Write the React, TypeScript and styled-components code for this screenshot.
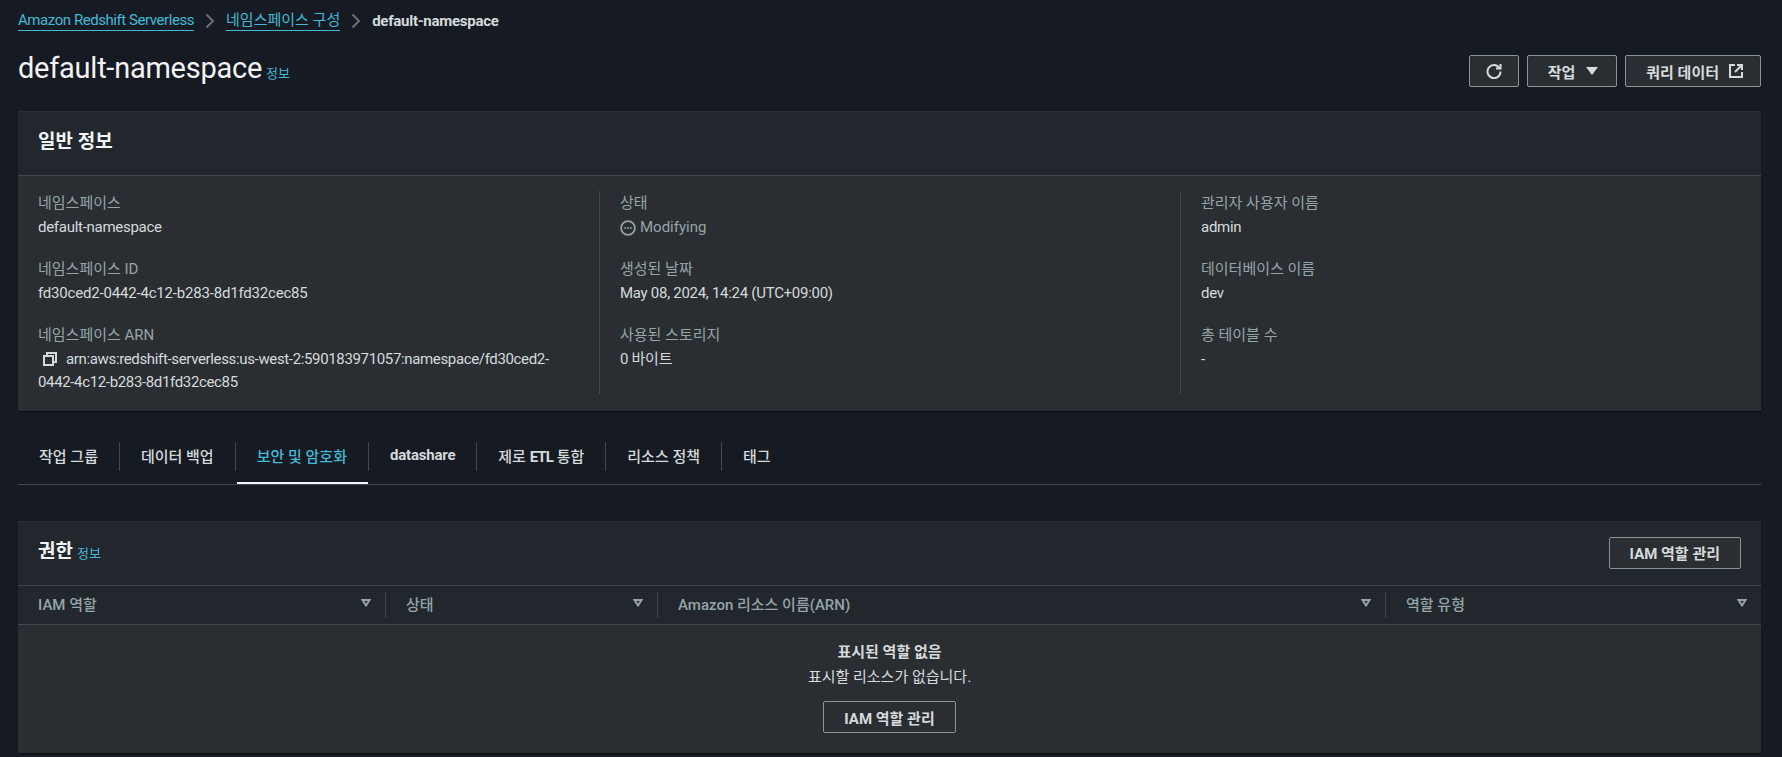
import React from 'react';
import styled, { createGlobalStyle } from 'styled-components';

const GlobalStyle = createGlobalStyle`
    html, body {
        margin: 0;
        height: 100%;
        background-color: #161a23;
    }
    body {
        font-family: Roboto, "Noto Sans CJK KR", sans-serif;
        font-size: 15px;
        color: #d5dbdb;
        overflow: hidden;
    }
    * {
        box-sizing: border-box;
    }
`;

const Page = styled.div`
    width: 1782px;
    height: 757px;
    padding: 0 21px 0 18px;
    overflow: hidden;
`;

const Breadcrumbs = styled.nav`
    display: flex;
    align-items: center;
    height: 40px;
    padding-top: 2px;
`;

const CrumbLink = styled.a<{ $latin?: boolean }>`
    color: #44b9d6;
    border-bottom: 1px solid #44b9d6;
    line-height: 19px;
    letter-spacing: ${(p) => (p.$latin ? '-0.44px' : '0')};
`;

const CrumbCurrent = styled.span`
    font-weight: 700;
    letter-spacing: -0.27px;
    color: #d5dbdb;
`;

const CrumbSep = styled.svg`
    width: 16px;
    height: 16px;
    margin: 0 8px;
    fill: none;
    stroke: #687078;
    stroke-width: 2;
`;

const PageHeader = styled.header`
    display: flex;
    justify-content: space-between;
    align-items: flex-start;
    height: 71px;
    padding-top: 10px;
`;

const Title = styled.h1`
    margin: 0;
    font-size: 29px;
    font-weight: 400;
    line-height: 36px;
    letter-spacing: -0.25px;
    color: #f2f3f3;
`;

const InfoLink = styled.a`
    margin-left: 4px;
    font-size: 13px;
    font-weight: 400;
    letter-spacing: 0;
    color: #44b9d6;
`;

const Actions = styled.div`
    display: flex;
    gap: 8px;
    margin-top: 5px;
`;

const Button = styled.button`
    display: inline-flex;
    align-items: center;
    justify-content: center;
    gap: 9px;
    height: 32px;
    padding: 0 20px;
    border: 1px solid #879596;
    border-radius: 2px;
    font-family: inherit;
    font-size: 15px;
    font-weight: 700;
    color: #d5dbdb;
    background-color: #2a2e33;
`;

const IconButton = styled(Button)`
    padding: 0 16px;
`;

const MenuButton = styled(Button)`
    padding: 0 16px 0 20px;
`;

const Icon = styled.svg`
    width: 16px;
    height: 16px;
    flex: none;
`;

const Card = styled.section`
    border-top: 1px solid #2a2e33;
    background-color: #2a2e33;
    box-shadow: 0 1px 1px rgba(0, 0, 0, 0.5);
`;

const CardHeader = styled.div`
    display: flex;
    justify-content: space-between;
    align-items: center;
    height: 64px;
    padding: 0 20px 2px;
    border-bottom: 1px solid #414750;
    background-color: #22272e;
`;

const CardTitle = styled.h2`
    margin: 0 0 6px;
    font-size: 19px;
    font-weight: 700;
    color: #f2f3f3;
`;

const Columns = styled.div`
    display: grid;
    grid-template-columns: repeat(3, 1fr);
    padding: 15px 0 17px;
    height: 235px;
`;

const Column = styled.div`
    display: flex;
    flex-direction: column;
    gap: 18px;
    padding: 0 20px;

    & + & {
        border-left: 1px solid #414750;
    }
`;

const Field = styled.div`
    display: flex;
    flex-direction: column;
`;

const Label = styled.div`
    line-height: 25px;
    color: #95a5a6;
`;

const Value = styled.div`
    line-height: 23px;
    letter-spacing: -0.28px;
    color: #d5dbdb;
`;

const IdValue = styled(Value)`
    letter-spacing: -0.19px;
`;

const ArnValue = styled(Value)`
    letter-spacing: -0.35px;
`;

const StatusValue = styled.div`
    display: flex;
    align-items: center;
    gap: 4px;
    line-height: 23px;
    color: #95a5a6;
`;

const CopyIcon = styled(Icon)`
    margin: 0 8px -3px 4px;
`;

const Tabs = styled.div`
    display: flex;
    align-items: flex-start;
    height: 74px;
    padding-top: 31px;
    border-bottom: 1px solid #414750;
`;

const Tab = styled.div<{ $active?: boolean }>`
    position: relative;
    display: flex;
    align-items: center;
    height: 29px;
    padding: 0 21px 3px;
    font-weight: 500;
    color: ${(p) => (p.$active ? '#44b9d6' : '#d5dbdb')};

    & + & {
        border-left: 1px solid #414750;
    }

    ${(p) =>
        p.$active &&
        `&::after {
            content: '';
            position: absolute;
            left: 1px;
            right: 0;
            bottom: -13px;
            height: 2px;
            background-color: #f2f3f3;
        }`}
`;

const TabLatin = styled.b`
    font-weight: 700;
    letter-spacing: -0.2px;
    white-space: pre;
`;

const TabAcronym = styled(TabLatin)`
    letter-spacing: -0.9px;
`;

const PermissionCard = styled(Card)`
    margin-top: 36px;
`;

const HeadRow = styled.div`
    display: grid;
    grid-template-columns: 367px 272px 728px 1fr;
    align-items: center;
    height: 39px;
    border-bottom: 1px solid #414750;
    background-color: #22272e;
`;

const HeadCell = styled.div`
    display: flex;
    justify-content: space-between;
    align-items: center;
    height: 26px;
    padding: 0 11px 4px 20px;
    font-weight: 500;
    color: #95a5a6;

    & + & {
        border-left: 1px solid #414750;
    }
`;

const EmptyState = styled.div`
    display: flex;
    flex-direction: column;
    align-items: center;
    height: 128px;
    padding-top: 16px;
`;

const EmptyTitle = styled.div`
    font-weight: 700;
    line-height: 23px;
`;

const EmptyText = styled.div`
    line-height: 26px;
    margin-bottom: 11px;
`;

const RefreshIcon = () => (
    <Icon viewBox="0 0 16 16" fill="none" stroke="#d5dbdb" strokeWidth="2">
        <path d="M13.4 5A6.5 6.5 0 1 0 14.5 8.5" />
        <path d="M14.5 1v4.5H10" strokeLinejoin="miter" />
    </Icon>
);

const CaretIcon = () => (
    <Icon viewBox="0 0 16 16" fill="#d5dbdb">
        <path d="M2 4h12L8 12z" />
    </Icon>
);

const ExternalIcon = () => (
    <Icon viewBox="0 0 16 16" fill="none" stroke="#d5dbdb" strokeWidth="2">
        <path d="M7 2H2v12h12V9" />
        <path d="M9 2h5v5M14 2L7 9" />
    </Icon>
);

const ChevronSep = () => (
    <CrumbSep viewBox="0 0 16 16">
        <path d="M4.5 1.5L11 8l-6.5 6.5" />
    </CrumbSep>
);

const StatusIcon = () => (
    <Icon viewBox="0 0 16 16" fill="none" stroke="#95a5a6" strokeWidth="1.8">
        <circle cx="8" cy="8" r="6.9" />
        <path d="M4.5 8h1.4M7.3 8h1.4M10.1 8h1.4" />
    </Icon>
);

const FilterCaret = () => (
    <Icon viewBox="0 0 16 16" fill="none" stroke="#95a5a6" strokeWidth="2">
        <path d="M4.5 5h7L8 10.5z" />
    </Icon>
);

const tabs: { key: string; label: React.ReactNode }[] = [
    { key: 'workgroup', label: '작업 그룹' },
    { key: 'backup', label: '데이터 백업' },
    { key: 'security', label: '보안 및 암호화' },
    { key: 'datashare', label: <TabLatin>datashare</TabLatin> },
    { key: 'etl', label: <span>제로 <TabAcronym>ETL</TabAcronym> 통합</span> },
    { key: 'policy', label: '리소스 정책' },
    { key: 'tags', label: '태그' },
];
const headers = ['IAM 역할', '상태', 'Amazon 리소스 이름(ARN)', '역할 유형'];

export default function App() {
    return (
        <Page>
            <GlobalStyle />
            <Breadcrumbs>
                <CrumbLink $latin>Amazon Redshift Serverless</CrumbLink>
                <ChevronSep />
                <CrumbLink>네임스페이스 구성</CrumbLink>
                <ChevronSep />
                <CrumbCurrent>default-namespace</CrumbCurrent>
            </Breadcrumbs>
            <PageHeader>
                <Title>
                    default-namespace<InfoLink>정보</InfoLink>
                </Title>
                <Actions>
                    <IconButton>
                        <RefreshIcon />
                    </IconButton>
                    <MenuButton>
                        작업 <CaretIcon />
                    </MenuButton>
                    <MenuButton>
                        쿼리 데이터 <ExternalIcon />
                    </MenuButton>
                </Actions>
            </PageHeader>
            <Card>
                <CardHeader>
                    <CardTitle>일반 정보</CardTitle>
                </CardHeader>
                <Columns>
                    <Column>
                        <Field>
                            <Label>네임스페이스</Label>
                            <Value>default-namespace</Value>
                        </Field>
                        <Field>
                            <Label>네임스페이스 ID</Label>
                            <IdValue>fd30ced2-0442-4c12-b283-8d1fd32cec85</IdValue>
                        </Field>
                        <Field>
                            <Label>네임스페이스 ARN</Label>
                            <ArnValue>
                                <CopyIcon viewBox="0 0 16 16" fill="none" stroke="#d5dbdb" strokeWidth="2">
                                    <path d="M2 5h9v9H2z" />
                                    <path d="M5 5V2h9v9h-3" />
                                </CopyIcon>
                                arn:aws:redshift-serverless:us-west-2:590183971057:namespace/fd30ced2-0442-4c12-b283-8d1fd32cec85
                            </ArnValue>
                        </Field>
                    </Column>
                    <Column>
                        <Field>
                            <Label>상태</Label>
                            <StatusValue>
                                <StatusIcon />
                                Modifying
                            </StatusValue>
                        </Field>
                        <Field>
                            <Label>생성된 날짜</Label>
                            <Value>May 08, 2024, 14:24 (UTC+09:00)</Value>
                        </Field>
                        <Field>
                            <Label>사용된 스토리지</Label>
                            <Value>0 바이트</Value>
                        </Field>
                    </Column>
                    <Column>
                        <Field>
                            <Label>관리자 사용자 이름</Label>
                            <Value>admin</Value>
                        </Field>
                        <Field>
                            <Label>데이터베이스 이름</Label>
                            <Value>dev</Value>
                        </Field>
                        <Field>
                            <Label>총 테이블 수</Label>
                            <Value>-</Value>
                        </Field>
                    </Column>
                </Columns>
            </Card>
            <Tabs>
                {tabs.map((tab) => (
                    <Tab key={tab.key} $active={tab.key === 'security'}>
                        {tab.label}
                    </Tab>
                ))}
            </Tabs>
            <PermissionCard>
                <CardHeader>
                    <CardTitle>
                        권한<InfoLink>정보</InfoLink>
                    </CardTitle>
                    <Button>IAM 역할 관리</Button>
                </CardHeader>
                <HeadRow>
                    {headers.map((h) => (
                        <HeadCell key={h}>
                            {h}
                            <FilterCaret />
                        </HeadCell>
                    ))}
                </HeadRow>
                <EmptyState>
                    <EmptyTitle>표시된 역할 없음</EmptyTitle>
                    <EmptyText>표시할 리소스가 없습니다.</EmptyText>
                    <Button>IAM 역할 관리</Button>
                </EmptyState>
            </PermissionCard>
        </Page>
    );
}
